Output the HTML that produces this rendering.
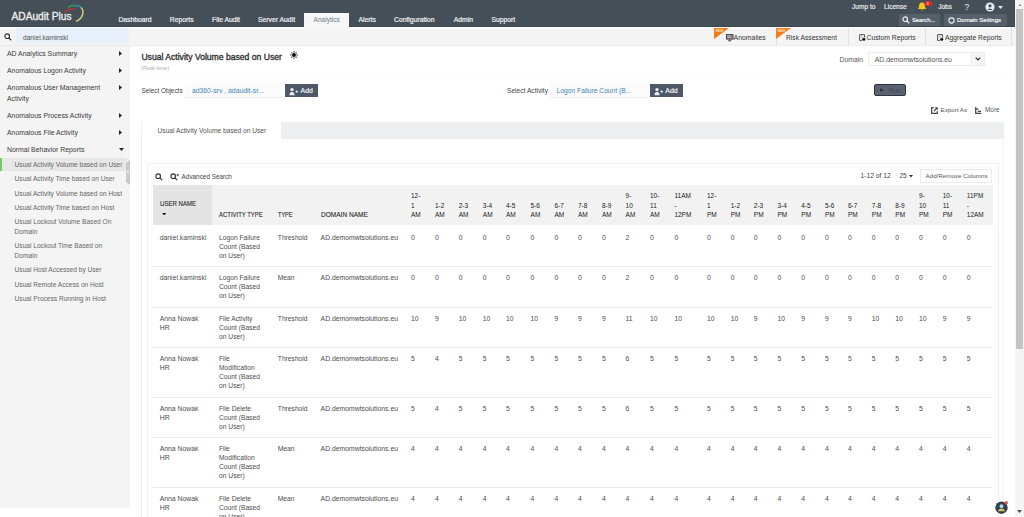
<!DOCTYPE html>
<html><head><meta charset="utf-8"><style>
html,body{margin:0;padding:0;width:1024px;height:517px;overflow:hidden;background:#fff;font-family:"Liberation Sans",sans-serif}
.t{position:absolute;white-space:nowrap;line-height:10px;height:10px}
.b{position:absolute}
</style></head><body>
<div class="b" style="left:0px;top:0px;width:1015px;height:27.4px;background:#444f57"></div>
<div class="t" style="left:11.5px;top:11.90px;font-size:10.2px;color:#f0f2f3;font-weight:normal;-webkit-text-stroke:0.3px #f0f2f3;">ADAudit Plus</div>
<svg class="b" style="left:62px;top:1px" width="26" height="24" viewBox="0 0 26 24">
<path d="M2.5 11.3 Q7.5 7.2 13 8.2" stroke="#b8363a" stroke-width="1.4" fill="none"/>
<path d="M6 6 Q11 3.5 16.6 5" stroke="#2e9e5a" stroke-width="1.4" fill="none"/>
<path d="M14.6 4.5 Q18.5 4.5 19.8 7.5" stroke="#2a8aa8" stroke-width="1.4" fill="none"/>
<path d="M19 6.5 C22.5 10 21.5 17 14 20.3" stroke="#d8d47c" stroke-width="1.4" fill="none"/>
</svg>
<div class="t" style="left:118.4px;top:15.00px;font-size:6.8px;color:#eef0f2;font-weight:normal;-webkit-text-stroke:0.2px #eef0f2;">Dashboard</div>
<div class="t" style="left:169.8px;top:15.00px;font-size:6.8px;color:#eef0f2;font-weight:normal;-webkit-text-stroke:0.2px #eef0f2;">Reports</div>
<div class="t" style="left:212px;top:15.00px;font-size:6.8px;color:#eef0f2;font-weight:normal;-webkit-text-stroke:0.2px #eef0f2;">File Audit</div>
<div class="t" style="left:258px;top:15.00px;font-size:6.8px;color:#eef0f2;font-weight:normal;-webkit-text-stroke:0.2px #eef0f2;">Server Audit</div>
<div class="t" style="left:358.5px;top:15.00px;font-size:6.8px;color:#eef0f2;font-weight:normal;-webkit-text-stroke:0.2px #eef0f2;">Alerts</div>
<div class="t" style="left:394px;top:15.00px;font-size:6.8px;color:#eef0f2;font-weight:normal;-webkit-text-stroke:0.2px #eef0f2;">Configuration</div>
<div class="t" style="left:453.7px;top:15.00px;font-size:6.8px;color:#eef0f2;font-weight:normal;-webkit-text-stroke:0.2px #eef0f2;">Admin</div>
<div class="t" style="left:491.4px;top:15.00px;font-size:6.8px;color:#eef0f2;font-weight:normal;-webkit-text-stroke:0.2px #eef0f2;">Support</div>
<div class="t" style="left:852px;top:2.10px;font-size:6.6px;color:#eef0f2;font-weight:normal;-webkit-text-stroke:0.15px #eef0f2;">Jump to</div>
<div class="t" style="left:884px;top:2.10px;font-size:6.6px;color:#eef0f2;font-weight:normal;-webkit-text-stroke:0.15px #eef0f2;">License</div>
<div class="t" style="left:938.2px;top:2.10px;font-size:6.5px;color:#eef0f2;font-weight:normal;-webkit-text-stroke:0.15px #eef0f2;">Jobs</div>
<div class="t" style="left:964.5px;top:2.10px;font-size:8.5px;color:#eef0f2;font-weight:normal;">?</div>
<svg class="b" style="left:917px;top:2px" width="10" height="9" viewBox="0 0 10 9"><path d="M5 0.5 C2.5 0.5 2 2.5 2 4.5 L1 7 L9 7 L8 4.5 C8 2.5 7.5 0.5 5 0.5Z M4 7.5 L6 7.5 L5 8.8Z" fill="#f5c518"/></svg>
<div class="b" style="left:924.5px;top:1.2px;width:7.0px;height:5.0px;background:#e5252a;border-radius:1.5px"></div>
<div class="t" style="left:926.6px;top:0.5px;font-size:4px;line-height:6px;color:#fff">3</div>
<svg class="b" style="left:985px;top:2px" width="10" height="10" viewBox="0 0 10 10"><circle cx="5" cy="5" r="4.6" fill="#e9ecee"/><circle cx="5" cy="3.8" r="1.6" fill="#444f57"/><path d="M2.2 8 Q5 4.8 7.8 8" fill="#444f57"/></svg>
<svg class="b" style="left:998.3px;top:5.6px" width="5" height="3" viewBox="0 0 5 3"><path d="M0 0 L5 0 L2.5 3Z" fill="#e9ecee"/></svg>
<div class="b" style="left:899.2px;top:14px;width:40.799999999999955px;height:11.600000000000001px;background:#55606a;border-radius:1px"></div>
<div class="b" style="left:944.3px;top:14px;width:62.30000000000007px;height:11.600000000000001px;background:#55606a;border-radius:1px"></div>
<svg class="b" style="left:902px;top:16px" width="8" height="8" viewBox="0 0 8 8"><circle cx="3.2" cy="3.2" r="2.3" stroke="#eef0f2" stroke-width="1.2" fill="none"/><path d="M4.9 4.9 L7.2 7.2" stroke="#eef0f2" stroke-width="1.3"/></svg>
<div class="t" style="left:912px;top:14.80px;font-size:5.8px;color:#f2f4f5;font-weight:normal;-webkit-text-stroke:0.2px #f2f4f5;">Search...</div>
<svg class="b" style="left:948px;top:16.5px" width="7" height="7" viewBox="0 0 7 7"><circle cx="3.5" cy="3.5" r="2.6" stroke="#eef0f2" stroke-width="1.1" fill="none"/></svg>
<div class="t" style="left:957px;top:14.80px;font-size:6.0px;color:#f2f4f5;font-weight:normal;-webkit-text-stroke:0.2px #f2f4f5;">Domain Settings</div>
<div class="b" style="left:1015px;top:0px;width:9px;height:517px;background:#f5f5f5"></div>
<div class="b" style="left:1016px;top:9px;width:7px;height:339.5px;background:#c3c3c3"></div>
<svg class="b" style="left:1017.5px;top:3.5px" width="4" height="2.5" viewBox="0 0 4 2.5"><path d="M0 2.5 L4 2.5 L2 0Z" fill="#8a8a8a"/></svg>
<svg class="b" style="left:1017px;top:510px" width="5" height="3" viewBox="0 0 5 3"><path d="M0 0 L5 0 L2.5 3Z" fill="#505050"/></svg>
<div class="b" style="left:0px;top:27px;width:1015px;height:19px;background:#f4f4f4;border-bottom:1px solid #ebebeb;box-sizing:border-box"></div>
<div class="b" style="left:0px;top:27.4px;width:1015px;height:1.2000000000000028px;background:#fafafa"></div>
<div class="b" style="left:0px;top:26.4px;width:1015px;height:1.0px;background:#3d474e"></div>
<div class="b" style="left:304.2px;top:13px;width:44.80000000000001px;height:15.600000000000001px;background:#f6f6f6"></div>
<div class="t" style="left:313.5px;top:15.00px;font-size:6.6px;color:#6f7c85;font-weight:normal;">Analytics</div>
<div class="b" style="left:16px;top:28px;width:112.80000000000001px;height:15.399999999999999px;background:#e8f0fb"></div>
<svg class="b" style="left:4px;top:33px" width="8" height="8" viewBox="0 0 8 8"><circle cx="3.2" cy="3.2" r="2.3" stroke="#333" stroke-width="1.2" fill="none"/><path d="M4.9 4.9 L7.2 7.2" stroke="#333" stroke-width="1.3"/></svg>
<div class="t" style="left:23px;top:33.20px;font-size:6.6px;color:#555;font-weight:normal;">daniel.kaminski</div>
<div class="b" style="left:775.8px;top:28px;width:1.0px;height:17px;background:#e2e2e2"></div>
<div class="b" style="left:847.6px;top:28px;width:1.0px;height:17px;background:#e2e2e2"></div>
<div class="b" style="left:925.3px;top:28px;width:1.0px;height:17px;background:#e2e2e2"></div>
<div class="b" style="left:1011px;top:28px;width:1px;height:17px;background:#e2e2e2"></div>
<svg class="b" style="left:714.4px;top:27.8px" width="15" height="11" viewBox="0 0 15 11"><path d="M0 0 L15 0 L0 11Z" fill="#f07d1b"/><text x="1.6" y="4.3" font-size="3.3" fill="#fde3c8" font-family="Liberation Sans" font-weight="bold">NEW</text></svg>
<svg class="b" style="left:776px;top:27.8px" width="15" height="11" viewBox="0 0 15 11"><path d="M0 0 L15 0 L0 11Z" fill="#f07d1b"/><text x="1.6" y="4.3" font-size="3.3" fill="#fde3c8" font-family="Liberation Sans" font-weight="bold">NEW</text></svg>
<div class="t" style="left:733.6px;top:33.40px;font-size:6.9px;color:#333;font-weight:normal;">Anomalies</div>
<div class="t" style="left:786px;top:33.40px;font-size:6.7px;color:#333;font-weight:normal;">Risk Assessment</div>
<div class="t" style="left:866.5px;top:33.40px;font-size:6.8px;color:#333;font-weight:normal;">Custom Reports</div>
<div class="t" style="left:945px;top:33.40px;font-size:6.75px;color:#333;font-weight:normal;">Aggregate Reports</div>
<svg class="b" style="left:725.8px;top:33.8px" width="8" height="8" viewBox="0 0 8 8"><rect x="0.5" y="0.5" width="6.5" height="4.6" stroke="#444" stroke-width="0.9" fill="#8a8a8a"/><path d="M1.5 2 H4 M1.5 3.3 H5" stroke="#ddd" stroke-width="0.6"/><path d="M3.75 5.3 V6.6 M2.2 6.8 H5.3" stroke="#333" stroke-width="0.9"/></svg>
<svg class="b" style="left:859px;top:33.5px" width="7" height="8" viewBox="0 0 7 8"><path d="M5.6 3.5 V0.6 H0.6 V6.4 H3" stroke="#555" stroke-width="1" fill="none"/><path d="M1.8 2 H4 M1.8 3.2 H3.5" stroke="#999" stroke-width="0.6"/><circle cx="4.8" cy="5.3" r="1.5" fill="#111"/></svg>
<svg class="b" style="left:937px;top:33.5px" width="7" height="8" viewBox="0 0 7 8"><path d="M5.6 3.5 V0.6 H0.6 V6.4 H3" stroke="#555" stroke-width="1" fill="none"/><path d="M1.8 2 H4 M1.8 3.2 H3.5" stroke="#999" stroke-width="0.6"/><circle cx="4.8" cy="5.3" r="1.5" fill="#111"/></svg>
<div class="b" style="left:0px;top:46px;width:130px;height:462px;background:#f4f4f4"></div>
<div class="t" style="left:7px;top:49.20px;font-size:6.9px;color:#3a3a3a;font-weight:normal;">AD Analytics Summary</div>
<div class="t" style="left:7px;top:66.40px;font-size:6.9px;color:#3a3a3a;font-weight:normal;">Anomalous Logon Activity</div>
<div class="t" style="left:7px;top:83.20px;font-size:6.9px;color:#3a3a3a;font-weight:normal;">Anomalous User Management</div>
<div class="t" style="left:7px;top:94.30px;font-size:6.9px;color:#3a3a3a;font-weight:normal;">Activity</div>
<div class="t" style="left:7px;top:111.20px;font-size:6.9px;color:#3a3a3a;font-weight:normal;">Anomalous Process Activity</div>
<div class="t" style="left:7px;top:128.40px;font-size:6.9px;color:#3a3a3a;font-weight:normal;">Anomalous File Activity</div>
<div class="t" style="left:7px;top:145.40px;font-size:6.9px;color:#3a3a3a;font-weight:normal;">Normal Behavior Reports</div>
<svg class="b" style="left:119px;top:50.8px" width="3" height="5" viewBox="0 0 3 5"><path d="M0 0 L3 2.5 L0 5Z" fill="#222"/></svg>
<svg class="b" style="left:119px;top:67.7px" width="3" height="5" viewBox="0 0 3 5"><path d="M0 0 L3 2.5 L0 5Z" fill="#222"/></svg>
<svg class="b" style="left:119px;top:84.9px" width="3" height="5" viewBox="0 0 3 5"><path d="M0 0 L3 2.5 L0 5Z" fill="#222"/></svg>
<svg class="b" style="left:119px;top:112.8px" width="3" height="5" viewBox="0 0 3 5"><path d="M0 0 L3 2.5 L0 5Z" fill="#222"/></svg>
<svg class="b" style="left:119px;top:129.7px" width="3" height="5" viewBox="0 0 3 5"><path d="M0 0 L3 2.5 L0 5Z" fill="#222"/></svg>
<svg class="b" style="left:118.5px;top:147.5px" width="5" height="3" viewBox="0 0 5 3"><path d="M0 0 L5 0 L2.5 3Z" fill="#222"/></svg>
<div class="b" style="left:0px;top:158px;width:127px;height:13px;background:#e7e7e7"></div>
<div class="b" style="left:0px;top:158px;width:1.8px;height:13px;background:#7cc46a"></div>
<div class="t" style="left:14.6px;top:160.20px;font-size:6.6px;color:#666;font-weight:normal;">Usual Activity Volume based on User</div>
<div class="t" style="left:14.6px;top:174.40px;font-size:6.6px;color:#666;font-weight:normal;">Usual Activity Time based on User</div>
<div class="t" style="left:14.6px;top:188.50px;font-size:6.6px;color:#666;font-weight:normal;">Usual Activity Volume based on Host</div>
<div class="t" style="left:14.6px;top:203.20px;font-size:6.6px;color:#666;font-weight:normal;">Usual Activity Time based on Host</div>
<div class="t" style="left:14.6px;top:216.80px;font-size:6.6px;color:#666;font-weight:normal;">Usual Lockout Volume Based On</div>
<div class="t" style="left:14.6px;top:227.20px;font-size:6.6px;color:#666;font-weight:normal;">Domain</div>
<div class="t" style="left:14.6px;top:240.90px;font-size:6.6px;color:#666;font-weight:normal;">Usual Lockout Time Based on</div>
<div class="t" style="left:14.6px;top:251.10px;font-size:6.6px;color:#666;font-weight:normal;">Domain</div>
<div class="t" style="left:14.6px;top:264.80px;font-size:6.6px;color:#666;font-weight:normal;">Usual Host Accessed by User</div>
<div class="t" style="left:14.6px;top:279.80px;font-size:6.6px;color:#666;font-weight:normal;">Usual Remote Access on Host</div>
<div class="t" style="left:14.6px;top:293.80px;font-size:6.6px;color:#666;font-weight:normal;">Usual Process Running in Host</div>
<svg class="b" style="left:126px;top:160px" width="4" height="25" viewBox="0 0 4 25"><path d="M4 0 L4 25 L0 22 L0 3Z" fill="#c9c9c9"/><rect x="1.5" y="10" width="1" height="3" fill="#fff"/></svg>
<div class="t" style="left:141.4px;top:51.90px;font-size:8.6px;color:#333;font-weight:normal;-webkit-text-stroke:0.35px #333;">Usual Activity Volume based on User</div>
<svg class="b" style="left:290.1px;top:50.5px" width="8" height="8" viewBox="0 0 8 8"><circle cx="4" cy="4" r="1.9" fill="#000"/><circle cx="7.10" cy="4.00" r="0.65" fill="#111"/><circle cx="6.19" cy="6.19" r="0.65" fill="#111"/><circle cx="4.00" cy="7.10" r="0.65" fill="#111"/><circle cx="1.81" cy="6.19" r="0.65" fill="#111"/><circle cx="0.90" cy="4.00" r="0.65" fill="#111"/><circle cx="1.81" cy="1.81" r="0.65" fill="#111"/><circle cx="4.00" cy="0.90" r="0.65" fill="#111"/><circle cx="6.19" cy="1.81" r="0.65" fill="#111"/></svg>
<div class="t" style="left:141px;top:62.60px;font-size:6.2px;color:#b0b0b0;font-weight:normal;transform:scaleX(0.92);transform-origin:0 0;">(Real-time)</div>
<div class="t" style="left:141.4px;top:86.00px;font-size:6.4px;color:#444;font-weight:normal;">Select Objects</div>
<div class="b" style="left:184.5px;top:83px;width:97.5px;height:14.599999999999994px;background:#fbfbfb;border-bottom:1px solid #f0f0f0;box-sizing:border-box"></div>
<div class="t" style="left:191.9px;top:86.00px;font-size:6.85px;color:#3b86b8;font-weight:normal;">ad360-srv , adaudit-sr...</div>
<div class="t" style="left:507px;top:85.90px;font-size:6.65px;color:#444;font-weight:normal;">Select Activity</div>
<div class="b" style="left:550px;top:83px;width:99px;height:14.599999999999994px;background:#fbfbfb;border-bottom:1px solid #f0f0f0;box-sizing:border-box"></div>
<div class="t" style="left:556.7px;top:85.90px;font-size:6.68px;color:#3b86b8;font-weight:normal;">Logon Failure Count (B...</div>
<div class="b" style="left:285.3px;top:84.2px;width:33.0px;height:13.099999999999994px;background:#4f5866"></div>
<svg class="b" style="left:289.3px;top:86.5px" width="10" height="9" viewBox="0 0 10 9"><circle cx="3" cy="2.6" r="1.7" fill="#e8ebef"/><path d="M0.4 8.3 L0.9 6.2 Q1.3 4.9 3 4.9 Q4.7 4.9 5.1 6.2 L5.6 8.3Z" fill="#e8ebef"/><path d="M6.4 4.6 H9 M7.7 3.3 V5.9" stroke="#e8ebef" stroke-width="0.9"/></svg>
<div class="t" style="left:300.6px;top:86.40px;font-size:6.9px;color:#eef0f2;font-weight:normal;-webkit-text-stroke:0.2px #eef0f2;">Add</div>
<div class="b" style="left:650px;top:84.2px;width:33px;height:13.099999999999994px;background:#4f5866"></div>
<svg class="b" style="left:654px;top:86.5px" width="10" height="9" viewBox="0 0 10 9"><circle cx="3" cy="2.6" r="1.7" fill="#e8ebef"/><path d="M0.4 8.3 L0.9 6.2 Q1.3 4.9 3 4.9 Q4.7 4.9 5.1 6.2 L5.6 8.3Z" fill="#e8ebef"/><path d="M6.4 4.6 H9 M7.7 3.3 V5.9" stroke="#e8ebef" stroke-width="0.9"/></svg>
<div class="t" style="left:665.3px;top:86.40px;font-size:6.9px;color:#eef0f2;font-weight:normal;-webkit-text-stroke:0.2px #eef0f2;">Add</div>
<div class="t" style="left:839.6px;top:54.80px;font-size:6.79px;color:#555;font-weight:normal;">Domain</div>
<div class="b" style="left:868px;top:51.5px;width:117.29999999999995px;height:14.299999999999997px;background:#fff;border:1px solid #ececec;box-sizing:border-box"></div>
<div class="b" style="left:970px;top:52.5px;width:14.299999999999955px;height:12.299999999999997px;background:#f5f5f5"></div>
<div class="t" style="left:874.8px;top:54.80px;font-size:6.8px;color:#555;font-weight:normal;">AD.demomwtsolutions.eu</div>
<svg class="b" style="left:975.3px;top:56.8px" width="6" height="4" viewBox="0 0 6 4"><path d="M0.7 0.7 L3 3 L5.3 0.7" stroke="#333" stroke-width="1.2" fill="none"/></svg>
<div class="b" style="left:874px;top:84.2px;width:32px;height:12.0px;background:#5b6370;border:1px solid #2f343c;border-radius:2px;box-sizing:border-box"></div>
<svg class="b" style="left:879.8px;top:87.6px" width="4.2" height="4.2" viewBox="0 0 5 5"><path d="M0 0 L5 2.5 L0 5Z" fill="#353a42"/></svg>
<div class="t" style="left:888.8px;top:85.70px;font-size:6.6px;color:#3f4550;font-weight:normal;">Run</div>
<svg class="b" style="left:930.5px;top:106.5px" width="7" height="7" viewBox="0 0 7 7"><path d="M2.8 0.7 H0.7 V6.3 H6.3 V4.2" stroke="#444" stroke-width="1.2" fill="none"/><path d="M3 4 L6.3 0.7 M4.2 0.7 H6.3 V2.8" stroke="#444" stroke-width="1.1" fill="none"/></svg>
<div class="t" style="left:940.6px;top:104.60px;font-size:6.2px;color:#555;font-weight:normal;">Export As</div>
<svg class="b" style="left:975px;top:106.5px" width="7" height="7" viewBox="0 0 7 7"><path d="M0.7 0 V6.3 H6.3 M0.7 2.2 H3.5 M2.8 4.3 H6" stroke="#444" stroke-width="1.2" fill="none"/></svg>
<div class="t" style="left:985px;top:104.60px;font-size:6.4px;color:#555;font-weight:normal;">More</div>
<div class="b" style="left:131px;top:74px;width:884px;height:1px;background:#fbfbfb"></div>
<div class="b" style="left:141px;top:121.8px;width:863px;height:395.2px;background:#fff;border-left:1px solid #ebebeb;border-right:1px solid #f5f5f5;box-sizing:border-box"></div>
<div class="b" style="left:141px;top:121.8px;width:863px;height:16.89999999999999px;background:#eceef0"></div>
<div class="b" style="left:141.6px;top:121.8px;width:139.9px;height:16.89999999999999px;background:#fff"></div>
<div class="t" style="left:157.5px;top:125.60px;font-size:6.67px;color:#555;font-weight:normal;">Usual Activity Volume based on User</div>
<div class="b" style="left:147px;top:163px;width:851.8px;height:357px;background:#fff;border:1px solid #f0f0f0;box-sizing:border-box"></div>
<svg class="b" style="left:154.5px;top:172.8px" width="8" height="8" viewBox="0 0 8 8"><circle cx="3.2" cy="3.2" r="2.3" stroke="#333" stroke-width="1.1" fill="none"/><path d="M4.9 4.9 L7.2 7.2" stroke="#333" stroke-width="1.2"/></svg>
<svg class="b" style="left:169.8px;top:172.6px" width="9" height="8" viewBox="0 0 9 8"><circle cx="3.2" cy="3.2" r="2.3" stroke="#333" stroke-width="1.1" fill="none"/><path d="M4.9 4.9 L7.2 7.2" stroke="#333" stroke-width="1.2"/><path d="M6.5 2 H9 M7.75 0.75 V3.25" stroke="#333" stroke-width="0.8"/></svg>
<div class="t" style="left:181.6px;top:172.20px;font-size:6.38px;color:#444;font-weight:normal;">Advanced Search</div>
<div class="t" style="left:860.4px;top:171.40px;font-size:6.75px;color:#444;font-weight:normal;">1-12 of 12</div>
<div class="t" style="left:899.4px;top:171.40px;font-size:6.5px;color:#444;font-weight:normal;">25</div>
<svg class="b" style="left:908.5px;top:175px" width="4" height="3" viewBox="0 0 4 3"><path d="M0 0 L4 0 L2 2.5Z" fill="#333"/></svg>
<div class="b" style="left:919.5px;top:169.4px;width:72.70000000000005px;height:13.400000000000006px;background:#fff;border:1px solid #ebebeb;box-sizing:border-box"></div>
<div class="t" style="left:925.6px;top:171.20px;font-size:6.2px;color:#555;font-weight:normal;">Add/Remove Columns</div>
<div class="b" style="left:153px;top:185.3px;width:839.7px;height:39.89999999999998px;background:#f2f2f2"></div>
<div class="b" style="left:153px;top:185.3px;width:59px;height:39.89999999999998px;background:#e4e4e4"></div>
<div class="t" style="left:159.7px;top:199.45px;font-size:7.0px;color:#333;font-weight:normal;transform:scaleX(0.866);transform-origin:0 0;-webkit-text-stroke:0.15px #333;">USER NAME</div>
<svg class="b" style="left:161.8px;top:212.6px" width="4.4" height="2.6" viewBox="0 0 4.4 2.6"><path d="M0 0 L4.4 0 L2.2 2.6Z" fill="#222"/></svg>
<div class="t" style="left:219.1px;top:209.60px;font-size:7.0px;color:#333;font-weight:normal;transform:scaleX(0.849);transform-origin:0 0;-webkit-text-stroke:0.15px #333;">ACTIVITY TYPE</div>
<div class="t" style="left:278.1px;top:209.60px;font-size:7.0px;color:#333;font-weight:normal;transform:scaleX(0.79);transform-origin:0 0;-webkit-text-stroke:0.15px #333;">TYPE</div>
<div class="t" style="left:321px;top:209.60px;font-size:7.0px;color:#333;font-weight:normal;transform:scaleX(0.933);transform-origin:0 0;-webkit-text-stroke:0.15px #333;">DOMAIN NAME</div>
<div class="t" style="left:411px;top:191.20px;font-size:6.5px;color:#222;font-weight:normal;">12-</div>
<div class="t" style="left:411px;top:200.60px;font-size:6.5px;color:#222;font-weight:normal;">1</div>
<div class="t" style="left:411px;top:209.90px;font-size:6.5px;color:#222;font-weight:normal;">AM</div>
<div class="t" style="left:435px;top:200.60px;font-size:6.5px;color:#222;font-weight:normal;">1-2</div>
<div class="t" style="left:435px;top:209.90px;font-size:6.5px;color:#222;font-weight:normal;">AM</div>
<div class="t" style="left:458.75px;top:200.60px;font-size:6.5px;color:#222;font-weight:normal;">2-3</div>
<div class="t" style="left:458.75px;top:209.90px;font-size:6.5px;color:#222;font-weight:normal;">AM</div>
<div class="t" style="left:482.8px;top:200.60px;font-size:6.5px;color:#222;font-weight:normal;">3-4</div>
<div class="t" style="left:482.8px;top:209.90px;font-size:6.5px;color:#222;font-weight:normal;">AM</div>
<div class="t" style="left:506px;top:200.60px;font-size:6.5px;color:#222;font-weight:normal;">4-5</div>
<div class="t" style="left:506px;top:209.90px;font-size:6.5px;color:#222;font-weight:normal;">AM</div>
<div class="t" style="left:530.6px;top:200.60px;font-size:6.5px;color:#222;font-weight:normal;">5-6</div>
<div class="t" style="left:530.6px;top:209.90px;font-size:6.5px;color:#222;font-weight:normal;">AM</div>
<div class="t" style="left:554.4px;top:200.60px;font-size:6.5px;color:#222;font-weight:normal;">6-7</div>
<div class="t" style="left:554.4px;top:209.90px;font-size:6.5px;color:#222;font-weight:normal;">AM</div>
<div class="t" style="left:578px;top:200.60px;font-size:6.5px;color:#222;font-weight:normal;">7-8</div>
<div class="t" style="left:578px;top:209.90px;font-size:6.5px;color:#222;font-weight:normal;">AM</div>
<div class="t" style="left:602px;top:200.60px;font-size:6.5px;color:#222;font-weight:normal;">8-9</div>
<div class="t" style="left:602px;top:209.90px;font-size:6.5px;color:#222;font-weight:normal;">AM</div>
<div class="t" style="left:625.6px;top:191.20px;font-size:6.5px;color:#222;font-weight:normal;">9-</div>
<div class="t" style="left:625.6px;top:200.60px;font-size:6.5px;color:#222;font-weight:normal;">10</div>
<div class="t" style="left:625.6px;top:209.90px;font-size:6.5px;color:#222;font-weight:normal;">AM</div>
<div class="t" style="left:650px;top:191.20px;font-size:6.5px;color:#222;font-weight:normal;">10-</div>
<div class="t" style="left:650px;top:200.60px;font-size:6.5px;color:#222;font-weight:normal;">11</div>
<div class="t" style="left:650px;top:209.90px;font-size:6.5px;color:#222;font-weight:normal;">AM</div>
<div class="t" style="left:674.4px;top:191.20px;font-size:6.5px;color:#222;font-weight:normal;">11AM</div>
<div class="t" style="left:674.4px;top:200.60px;font-size:6.5px;color:#222;font-weight:normal;">-</div>
<div class="t" style="left:674.4px;top:209.90px;font-size:6.5px;color:#222;font-weight:normal;">12PM</div>
<div class="t" style="left:707px;top:191.20px;font-size:6.5px;color:#222;font-weight:normal;">12-</div>
<div class="t" style="left:707px;top:200.60px;font-size:6.5px;color:#222;font-weight:normal;">1</div>
<div class="t" style="left:707px;top:209.90px;font-size:6.5px;color:#222;font-weight:normal;">PM</div>
<div class="t" style="left:730.7px;top:200.60px;font-size:6.5px;color:#222;font-weight:normal;">1-2</div>
<div class="t" style="left:730.7px;top:209.90px;font-size:6.5px;color:#222;font-weight:normal;">PM</div>
<div class="t" style="left:753.8px;top:200.60px;font-size:6.5px;color:#222;font-weight:normal;">2-3</div>
<div class="t" style="left:753.8px;top:209.90px;font-size:6.5px;color:#222;font-weight:normal;">PM</div>
<div class="t" style="left:777.5px;top:200.60px;font-size:6.5px;color:#222;font-weight:normal;">3-4</div>
<div class="t" style="left:777.5px;top:209.90px;font-size:6.5px;color:#222;font-weight:normal;">PM</div>
<div class="t" style="left:801.3px;top:200.60px;font-size:6.5px;color:#222;font-weight:normal;">4-5</div>
<div class="t" style="left:801.3px;top:209.90px;font-size:6.5px;color:#222;font-weight:normal;">PM</div>
<div class="t" style="left:825px;top:200.60px;font-size:6.5px;color:#222;font-weight:normal;">5-6</div>
<div class="t" style="left:825px;top:209.90px;font-size:6.5px;color:#222;font-weight:normal;">PM</div>
<div class="t" style="left:848px;top:200.60px;font-size:6.5px;color:#222;font-weight:normal;">6-7</div>
<div class="t" style="left:848px;top:209.90px;font-size:6.5px;color:#222;font-weight:normal;">PM</div>
<div class="t" style="left:871.8px;top:200.60px;font-size:6.5px;color:#222;font-weight:normal;">7-8</div>
<div class="t" style="left:871.8px;top:209.90px;font-size:6.5px;color:#222;font-weight:normal;">PM</div>
<div class="t" style="left:895.3px;top:200.60px;font-size:6.5px;color:#222;font-weight:normal;">8-9</div>
<div class="t" style="left:895.3px;top:209.90px;font-size:6.5px;color:#222;font-weight:normal;">PM</div>
<div class="t" style="left:919px;top:191.20px;font-size:6.5px;color:#222;font-weight:normal;">9-</div>
<div class="t" style="left:919px;top:200.60px;font-size:6.5px;color:#222;font-weight:normal;">10</div>
<div class="t" style="left:919px;top:209.90px;font-size:6.5px;color:#222;font-weight:normal;">PM</div>
<div class="t" style="left:942.7px;top:191.20px;font-size:6.5px;color:#222;font-weight:normal;">10-</div>
<div class="t" style="left:942.7px;top:200.60px;font-size:6.5px;color:#222;font-weight:normal;">11</div>
<div class="t" style="left:942.7px;top:209.90px;font-size:6.5px;color:#222;font-weight:normal;">PM</div>
<div class="t" style="left:966.8px;top:191.20px;font-size:6.5px;color:#222;font-weight:normal;">11PM</div>
<div class="t" style="left:966.8px;top:200.60px;font-size:6.5px;color:#222;font-weight:normal;">-</div>
<div class="t" style="left:966.8px;top:209.90px;font-size:6.5px;color:#222;font-weight:normal;">12AM</div>
<div class="b" style="left:153px;top:266.25px;width:839.3px;height:1.0px;background:#e9e9e9"></div>
<div class="b" style="left:153px;top:306.5px;width:839.3px;height:1.0px;background:#e9e9e9"></div>
<div class="b" style="left:153px;top:347px;width:839.3px;height:1px;background:#e9e9e9"></div>
<div class="b" style="left:153px;top:397.4px;width:839.3px;height:1.0px;background:#e9e9e9"></div>
<div class="b" style="left:153px;top:437.3px;width:839.3px;height:1.0px;background:#e9e9e9"></div>
<div class="b" style="left:153px;top:487.2px;width:839.3px;height:1.0px;background:#e9e9e9"></div>
<div class="t" style="left:159.7px;top:232.70px;font-size:6.85px;color:#4d4d4d;font-weight:normal;">daniel.kaminski</div>
<div class="t" style="left:219px;top:232.70px;font-size:6.7px;color:#4d4d4d;font-weight:normal;">Logon Failure</div>
<div class="t" style="left:219px;top:241.70px;font-size:6.7px;color:#4d4d4d;font-weight:normal;">Count (Based</div>
<div class="t" style="left:219px;top:250.70px;font-size:6.7px;color:#4d4d4d;font-weight:normal;">on User)</div>
<div class="t" style="left:277.8px;top:232.70px;font-size:6.7px;color:#4d4d4d;font-weight:normal;">Threshold</div>
<div class="t" style="left:320.6px;top:232.70px;font-size:6.83px;color:#4d4d4d;font-weight:normal;">AD.demomwtsolutions.eu</div>
<div class="t" style="left:411px;top:232.70px;font-size:6.8px;color:#4d4d4d;font-weight:normal;">0</div>
<div class="t" style="left:435px;top:232.70px;font-size:6.8px;color:#4d4d4d;font-weight:normal;">0</div>
<div class="t" style="left:458.75px;top:232.70px;font-size:6.8px;color:#4d4d4d;font-weight:normal;">0</div>
<div class="t" style="left:482.8px;top:232.70px;font-size:6.8px;color:#4d4d4d;font-weight:normal;">0</div>
<div class="t" style="left:506px;top:232.70px;font-size:6.8px;color:#4d4d4d;font-weight:normal;">0</div>
<div class="t" style="left:530.6px;top:232.70px;font-size:6.8px;color:#4d4d4d;font-weight:normal;">0</div>
<div class="t" style="left:554.4px;top:232.70px;font-size:6.8px;color:#4d4d4d;font-weight:normal;">0</div>
<div class="t" style="left:578px;top:232.70px;font-size:6.8px;color:#4d4d4d;font-weight:normal;">0</div>
<div class="t" style="left:602px;top:232.70px;font-size:6.8px;color:#4d4d4d;font-weight:normal;">0</div>
<div class="t" style="left:625.6px;top:232.70px;font-size:6.8px;color:#4d4d4d;font-weight:normal;">2</div>
<div class="t" style="left:650px;top:232.70px;font-size:6.8px;color:#4d4d4d;font-weight:normal;">0</div>
<div class="t" style="left:674.4px;top:232.70px;font-size:6.8px;color:#4d4d4d;font-weight:normal;">0</div>
<div class="t" style="left:707px;top:232.70px;font-size:6.8px;color:#4d4d4d;font-weight:normal;">0</div>
<div class="t" style="left:730.7px;top:232.70px;font-size:6.8px;color:#4d4d4d;font-weight:normal;">0</div>
<div class="t" style="left:753.8px;top:232.70px;font-size:6.8px;color:#4d4d4d;font-weight:normal;">0</div>
<div class="t" style="left:777.5px;top:232.70px;font-size:6.8px;color:#4d4d4d;font-weight:normal;">0</div>
<div class="t" style="left:801.3px;top:232.70px;font-size:6.8px;color:#4d4d4d;font-weight:normal;">0</div>
<div class="t" style="left:825px;top:232.70px;font-size:6.8px;color:#4d4d4d;font-weight:normal;">0</div>
<div class="t" style="left:848px;top:232.70px;font-size:6.8px;color:#4d4d4d;font-weight:normal;">0</div>
<div class="t" style="left:871.8px;top:232.70px;font-size:6.8px;color:#4d4d4d;font-weight:normal;">0</div>
<div class="t" style="left:895.3px;top:232.70px;font-size:6.8px;color:#4d4d4d;font-weight:normal;">0</div>
<div class="t" style="left:919px;top:232.70px;font-size:6.8px;color:#4d4d4d;font-weight:normal;">0</div>
<div class="t" style="left:942.7px;top:232.70px;font-size:6.8px;color:#4d4d4d;font-weight:normal;">0</div>
<div class="t" style="left:966.8px;top:232.70px;font-size:6.8px;color:#4d4d4d;font-weight:normal;">0</div>
<div class="t" style="left:159.7px;top:273.00px;font-size:6.85px;color:#4d4d4d;font-weight:normal;">daniel.kaminski</div>
<div class="t" style="left:219px;top:273.00px;font-size:6.7px;color:#4d4d4d;font-weight:normal;">Logon Failure</div>
<div class="t" style="left:219px;top:282.00px;font-size:6.7px;color:#4d4d4d;font-weight:normal;">Count (Based</div>
<div class="t" style="left:219px;top:291.00px;font-size:6.7px;color:#4d4d4d;font-weight:normal;">on User)</div>
<div class="t" style="left:277.8px;top:273.00px;font-size:6.7px;color:#4d4d4d;font-weight:normal;">Mean</div>
<div class="t" style="left:320.6px;top:273.00px;font-size:6.83px;color:#4d4d4d;font-weight:normal;">AD.demomwtsolutions.eu</div>
<div class="t" style="left:411px;top:273.00px;font-size:6.8px;color:#4d4d4d;font-weight:normal;">0</div>
<div class="t" style="left:435px;top:273.00px;font-size:6.8px;color:#4d4d4d;font-weight:normal;">0</div>
<div class="t" style="left:458.75px;top:273.00px;font-size:6.8px;color:#4d4d4d;font-weight:normal;">0</div>
<div class="t" style="left:482.8px;top:273.00px;font-size:6.8px;color:#4d4d4d;font-weight:normal;">0</div>
<div class="t" style="left:506px;top:273.00px;font-size:6.8px;color:#4d4d4d;font-weight:normal;">0</div>
<div class="t" style="left:530.6px;top:273.00px;font-size:6.8px;color:#4d4d4d;font-weight:normal;">0</div>
<div class="t" style="left:554.4px;top:273.00px;font-size:6.8px;color:#4d4d4d;font-weight:normal;">0</div>
<div class="t" style="left:578px;top:273.00px;font-size:6.8px;color:#4d4d4d;font-weight:normal;">0</div>
<div class="t" style="left:602px;top:273.00px;font-size:6.8px;color:#4d4d4d;font-weight:normal;">0</div>
<div class="t" style="left:625.6px;top:273.00px;font-size:6.8px;color:#4d4d4d;font-weight:normal;">2</div>
<div class="t" style="left:650px;top:273.00px;font-size:6.8px;color:#4d4d4d;font-weight:normal;">0</div>
<div class="t" style="left:674.4px;top:273.00px;font-size:6.8px;color:#4d4d4d;font-weight:normal;">0</div>
<div class="t" style="left:707px;top:273.00px;font-size:6.8px;color:#4d4d4d;font-weight:normal;">0</div>
<div class="t" style="left:730.7px;top:273.00px;font-size:6.8px;color:#4d4d4d;font-weight:normal;">0</div>
<div class="t" style="left:753.8px;top:273.00px;font-size:6.8px;color:#4d4d4d;font-weight:normal;">0</div>
<div class="t" style="left:777.5px;top:273.00px;font-size:6.8px;color:#4d4d4d;font-weight:normal;">0</div>
<div class="t" style="left:801.3px;top:273.00px;font-size:6.8px;color:#4d4d4d;font-weight:normal;">0</div>
<div class="t" style="left:825px;top:273.00px;font-size:6.8px;color:#4d4d4d;font-weight:normal;">0</div>
<div class="t" style="left:848px;top:273.00px;font-size:6.8px;color:#4d4d4d;font-weight:normal;">0</div>
<div class="t" style="left:871.8px;top:273.00px;font-size:6.8px;color:#4d4d4d;font-weight:normal;">0</div>
<div class="t" style="left:895.3px;top:273.00px;font-size:6.8px;color:#4d4d4d;font-weight:normal;">0</div>
<div class="t" style="left:919px;top:273.00px;font-size:6.8px;color:#4d4d4d;font-weight:normal;">0</div>
<div class="t" style="left:942.7px;top:273.00px;font-size:6.8px;color:#4d4d4d;font-weight:normal;">0</div>
<div class="t" style="left:966.8px;top:273.00px;font-size:6.8px;color:#4d4d4d;font-weight:normal;">0</div>
<div class="t" style="left:159.7px;top:314.20px;font-size:6.85px;color:#4d4d4d;font-weight:normal;">Anna Nowak</div>
<div class="t" style="left:159.7px;top:323.20px;font-size:6.85px;color:#4d4d4d;font-weight:normal;">HR</div>
<div class="t" style="left:219px;top:314.20px;font-size:6.7px;color:#4d4d4d;font-weight:normal;">File Activity</div>
<div class="t" style="left:219px;top:323.20px;font-size:6.7px;color:#4d4d4d;font-weight:normal;">Count (Based</div>
<div class="t" style="left:219px;top:332.20px;font-size:6.7px;color:#4d4d4d;font-weight:normal;">on User)</div>
<div class="t" style="left:277.8px;top:314.20px;font-size:6.7px;color:#4d4d4d;font-weight:normal;">Threshold</div>
<div class="t" style="left:320.6px;top:314.20px;font-size:6.83px;color:#4d4d4d;font-weight:normal;">AD.demomwtsolutions.eu</div>
<div class="t" style="left:411px;top:314.20px;font-size:6.8px;color:#4d4d4d;font-weight:normal;">10</div>
<div class="t" style="left:435px;top:314.20px;font-size:6.8px;color:#4d4d4d;font-weight:normal;">9</div>
<div class="t" style="left:458.75px;top:314.20px;font-size:6.8px;color:#4d4d4d;font-weight:normal;">10</div>
<div class="t" style="left:482.8px;top:314.20px;font-size:6.8px;color:#4d4d4d;font-weight:normal;">10</div>
<div class="t" style="left:506px;top:314.20px;font-size:6.8px;color:#4d4d4d;font-weight:normal;">10</div>
<div class="t" style="left:530.6px;top:314.20px;font-size:6.8px;color:#4d4d4d;font-weight:normal;">10</div>
<div class="t" style="left:554.4px;top:314.20px;font-size:6.8px;color:#4d4d4d;font-weight:normal;">9</div>
<div class="t" style="left:578px;top:314.20px;font-size:6.8px;color:#4d4d4d;font-weight:normal;">9</div>
<div class="t" style="left:602px;top:314.20px;font-size:6.8px;color:#4d4d4d;font-weight:normal;">9</div>
<div class="t" style="left:625.6px;top:314.20px;font-size:6.8px;color:#4d4d4d;font-weight:normal;">11</div>
<div class="t" style="left:650px;top:314.20px;font-size:6.8px;color:#4d4d4d;font-weight:normal;">10</div>
<div class="t" style="left:674.4px;top:314.20px;font-size:6.8px;color:#4d4d4d;font-weight:normal;">10</div>
<div class="t" style="left:707px;top:314.20px;font-size:6.8px;color:#4d4d4d;font-weight:normal;">10</div>
<div class="t" style="left:730.7px;top:314.20px;font-size:6.8px;color:#4d4d4d;font-weight:normal;">10</div>
<div class="t" style="left:753.8px;top:314.20px;font-size:6.8px;color:#4d4d4d;font-weight:normal;">9</div>
<div class="t" style="left:777.5px;top:314.20px;font-size:6.8px;color:#4d4d4d;font-weight:normal;">10</div>
<div class="t" style="left:801.3px;top:314.20px;font-size:6.8px;color:#4d4d4d;font-weight:normal;">9</div>
<div class="t" style="left:825px;top:314.20px;font-size:6.8px;color:#4d4d4d;font-weight:normal;">9</div>
<div class="t" style="left:848px;top:314.20px;font-size:6.8px;color:#4d4d4d;font-weight:normal;">9</div>
<div class="t" style="left:871.8px;top:314.20px;font-size:6.8px;color:#4d4d4d;font-weight:normal;">10</div>
<div class="t" style="left:895.3px;top:314.20px;font-size:6.8px;color:#4d4d4d;font-weight:normal;">10</div>
<div class="t" style="left:919px;top:314.20px;font-size:6.8px;color:#4d4d4d;font-weight:normal;">10</div>
<div class="t" style="left:942.7px;top:314.20px;font-size:6.8px;color:#4d4d4d;font-weight:normal;">9</div>
<div class="t" style="left:966.8px;top:314.20px;font-size:6.8px;color:#4d4d4d;font-weight:normal;">9</div>
<div class="t" style="left:159.7px;top:354.00px;font-size:6.85px;color:#4d4d4d;font-weight:normal;">Anna Nowak</div>
<div class="t" style="left:159.7px;top:363.00px;font-size:6.85px;color:#4d4d4d;font-weight:normal;">HR</div>
<div class="t" style="left:219px;top:354.00px;font-size:6.7px;color:#4d4d4d;font-weight:normal;">File</div>
<div class="t" style="left:219px;top:363.00px;font-size:6.7px;color:#4d4d4d;font-weight:normal;">Modification</div>
<div class="t" style="left:219px;top:372.00px;font-size:6.7px;color:#4d4d4d;font-weight:normal;">Count (Based</div>
<div class="t" style="left:219px;top:381.00px;font-size:6.7px;color:#4d4d4d;font-weight:normal;">on User)</div>
<div class="t" style="left:277.8px;top:354.00px;font-size:6.7px;color:#4d4d4d;font-weight:normal;">Threshold</div>
<div class="t" style="left:320.6px;top:354.00px;font-size:6.83px;color:#4d4d4d;font-weight:normal;">AD.demomwtsolutions.eu</div>
<div class="t" style="left:411px;top:354.00px;font-size:6.8px;color:#4d4d4d;font-weight:normal;">5</div>
<div class="t" style="left:435px;top:354.00px;font-size:6.8px;color:#4d4d4d;font-weight:normal;">4</div>
<div class="t" style="left:458.75px;top:354.00px;font-size:6.8px;color:#4d4d4d;font-weight:normal;">5</div>
<div class="t" style="left:482.8px;top:354.00px;font-size:6.8px;color:#4d4d4d;font-weight:normal;">5</div>
<div class="t" style="left:506px;top:354.00px;font-size:6.8px;color:#4d4d4d;font-weight:normal;">5</div>
<div class="t" style="left:530.6px;top:354.00px;font-size:6.8px;color:#4d4d4d;font-weight:normal;">5</div>
<div class="t" style="left:554.4px;top:354.00px;font-size:6.8px;color:#4d4d4d;font-weight:normal;">5</div>
<div class="t" style="left:578px;top:354.00px;font-size:6.8px;color:#4d4d4d;font-weight:normal;">5</div>
<div class="t" style="left:602px;top:354.00px;font-size:6.8px;color:#4d4d4d;font-weight:normal;">5</div>
<div class="t" style="left:625.6px;top:354.00px;font-size:6.8px;color:#4d4d4d;font-weight:normal;">6</div>
<div class="t" style="left:650px;top:354.00px;font-size:6.8px;color:#4d4d4d;font-weight:normal;">5</div>
<div class="t" style="left:674.4px;top:354.00px;font-size:6.8px;color:#4d4d4d;font-weight:normal;">5</div>
<div class="t" style="left:707px;top:354.00px;font-size:6.8px;color:#4d4d4d;font-weight:normal;">5</div>
<div class="t" style="left:730.7px;top:354.00px;font-size:6.8px;color:#4d4d4d;font-weight:normal;">5</div>
<div class="t" style="left:753.8px;top:354.00px;font-size:6.8px;color:#4d4d4d;font-weight:normal;">5</div>
<div class="t" style="left:777.5px;top:354.00px;font-size:6.8px;color:#4d4d4d;font-weight:normal;">5</div>
<div class="t" style="left:801.3px;top:354.00px;font-size:6.8px;color:#4d4d4d;font-weight:normal;">5</div>
<div class="t" style="left:825px;top:354.00px;font-size:6.8px;color:#4d4d4d;font-weight:normal;">5</div>
<div class="t" style="left:848px;top:354.00px;font-size:6.8px;color:#4d4d4d;font-weight:normal;">5</div>
<div class="t" style="left:871.8px;top:354.00px;font-size:6.8px;color:#4d4d4d;font-weight:normal;">5</div>
<div class="t" style="left:895.3px;top:354.00px;font-size:6.8px;color:#4d4d4d;font-weight:normal;">5</div>
<div class="t" style="left:919px;top:354.00px;font-size:6.8px;color:#4d4d4d;font-weight:normal;">5</div>
<div class="t" style="left:942.7px;top:354.00px;font-size:6.8px;color:#4d4d4d;font-weight:normal;">5</div>
<div class="t" style="left:966.8px;top:354.00px;font-size:6.8px;color:#4d4d4d;font-weight:normal;">5</div>
<div class="t" style="left:159.7px;top:404.00px;font-size:6.85px;color:#4d4d4d;font-weight:normal;">Anna Nowak</div>
<div class="t" style="left:159.7px;top:413.00px;font-size:6.85px;color:#4d4d4d;font-weight:normal;">HR</div>
<div class="t" style="left:219px;top:404.00px;font-size:6.7px;color:#4d4d4d;font-weight:normal;">File Delete</div>
<div class="t" style="left:219px;top:413.00px;font-size:6.7px;color:#4d4d4d;font-weight:normal;">Count (Based</div>
<div class="t" style="left:219px;top:422.00px;font-size:6.7px;color:#4d4d4d;font-weight:normal;">on User)</div>
<div class="t" style="left:277.8px;top:404.00px;font-size:6.7px;color:#4d4d4d;font-weight:normal;">Threshold</div>
<div class="t" style="left:320.6px;top:404.00px;font-size:6.83px;color:#4d4d4d;font-weight:normal;">AD.demomwtsolutions.eu</div>
<div class="t" style="left:411px;top:404.00px;font-size:6.8px;color:#4d4d4d;font-weight:normal;">5</div>
<div class="t" style="left:435px;top:404.00px;font-size:6.8px;color:#4d4d4d;font-weight:normal;">4</div>
<div class="t" style="left:458.75px;top:404.00px;font-size:6.8px;color:#4d4d4d;font-weight:normal;">5</div>
<div class="t" style="left:482.8px;top:404.00px;font-size:6.8px;color:#4d4d4d;font-weight:normal;">5</div>
<div class="t" style="left:506px;top:404.00px;font-size:6.8px;color:#4d4d4d;font-weight:normal;">5</div>
<div class="t" style="left:530.6px;top:404.00px;font-size:6.8px;color:#4d4d4d;font-weight:normal;">5</div>
<div class="t" style="left:554.4px;top:404.00px;font-size:6.8px;color:#4d4d4d;font-weight:normal;">5</div>
<div class="t" style="left:578px;top:404.00px;font-size:6.8px;color:#4d4d4d;font-weight:normal;">5</div>
<div class="t" style="left:602px;top:404.00px;font-size:6.8px;color:#4d4d4d;font-weight:normal;">5</div>
<div class="t" style="left:625.6px;top:404.00px;font-size:6.8px;color:#4d4d4d;font-weight:normal;">6</div>
<div class="t" style="left:650px;top:404.00px;font-size:6.8px;color:#4d4d4d;font-weight:normal;">5</div>
<div class="t" style="left:674.4px;top:404.00px;font-size:6.8px;color:#4d4d4d;font-weight:normal;">5</div>
<div class="t" style="left:707px;top:404.00px;font-size:6.8px;color:#4d4d4d;font-weight:normal;">5</div>
<div class="t" style="left:730.7px;top:404.00px;font-size:6.8px;color:#4d4d4d;font-weight:normal;">5</div>
<div class="t" style="left:753.8px;top:404.00px;font-size:6.8px;color:#4d4d4d;font-weight:normal;">5</div>
<div class="t" style="left:777.5px;top:404.00px;font-size:6.8px;color:#4d4d4d;font-weight:normal;">5</div>
<div class="t" style="left:801.3px;top:404.00px;font-size:6.8px;color:#4d4d4d;font-weight:normal;">5</div>
<div class="t" style="left:825px;top:404.00px;font-size:6.8px;color:#4d4d4d;font-weight:normal;">5</div>
<div class="t" style="left:848px;top:404.00px;font-size:6.8px;color:#4d4d4d;font-weight:normal;">5</div>
<div class="t" style="left:871.8px;top:404.00px;font-size:6.8px;color:#4d4d4d;font-weight:normal;">5</div>
<div class="t" style="left:895.3px;top:404.00px;font-size:6.8px;color:#4d4d4d;font-weight:normal;">5</div>
<div class="t" style="left:919px;top:404.00px;font-size:6.8px;color:#4d4d4d;font-weight:normal;">5</div>
<div class="t" style="left:942.7px;top:404.00px;font-size:6.8px;color:#4d4d4d;font-weight:normal;">5</div>
<div class="t" style="left:966.8px;top:404.00px;font-size:6.8px;color:#4d4d4d;font-weight:normal;">5</div>
<div class="t" style="left:159.7px;top:444.30px;font-size:6.85px;color:#4d4d4d;font-weight:normal;">Anna Nowak</div>
<div class="t" style="left:159.7px;top:453.30px;font-size:6.85px;color:#4d4d4d;font-weight:normal;">HR</div>
<div class="t" style="left:219px;top:444.30px;font-size:6.7px;color:#4d4d4d;font-weight:normal;">File</div>
<div class="t" style="left:219px;top:453.30px;font-size:6.7px;color:#4d4d4d;font-weight:normal;">Modification</div>
<div class="t" style="left:219px;top:462.30px;font-size:6.7px;color:#4d4d4d;font-weight:normal;">Count (Based</div>
<div class="t" style="left:219px;top:471.30px;font-size:6.7px;color:#4d4d4d;font-weight:normal;">on User)</div>
<div class="t" style="left:277.8px;top:444.30px;font-size:6.7px;color:#4d4d4d;font-weight:normal;">Mean</div>
<div class="t" style="left:320.6px;top:444.30px;font-size:6.83px;color:#4d4d4d;font-weight:normal;">AD.demomwtsolutions.eu</div>
<div class="t" style="left:411px;top:444.30px;font-size:6.8px;color:#4d4d4d;font-weight:normal;">4</div>
<div class="t" style="left:435px;top:444.30px;font-size:6.8px;color:#4d4d4d;font-weight:normal;">4</div>
<div class="t" style="left:458.75px;top:444.30px;font-size:6.8px;color:#4d4d4d;font-weight:normal;">4</div>
<div class="t" style="left:482.8px;top:444.30px;font-size:6.8px;color:#4d4d4d;font-weight:normal;">4</div>
<div class="t" style="left:506px;top:444.30px;font-size:6.8px;color:#4d4d4d;font-weight:normal;">4</div>
<div class="t" style="left:530.6px;top:444.30px;font-size:6.8px;color:#4d4d4d;font-weight:normal;">4</div>
<div class="t" style="left:554.4px;top:444.30px;font-size:6.8px;color:#4d4d4d;font-weight:normal;">4</div>
<div class="t" style="left:578px;top:444.30px;font-size:6.8px;color:#4d4d4d;font-weight:normal;">4</div>
<div class="t" style="left:602px;top:444.30px;font-size:6.8px;color:#4d4d4d;font-weight:normal;">4</div>
<div class="t" style="left:625.6px;top:444.30px;font-size:6.8px;color:#4d4d4d;font-weight:normal;">4</div>
<div class="t" style="left:650px;top:444.30px;font-size:6.8px;color:#4d4d4d;font-weight:normal;">4</div>
<div class="t" style="left:674.4px;top:444.30px;font-size:6.8px;color:#4d4d4d;font-weight:normal;">4</div>
<div class="t" style="left:707px;top:444.30px;font-size:6.8px;color:#4d4d4d;font-weight:normal;">4</div>
<div class="t" style="left:730.7px;top:444.30px;font-size:6.8px;color:#4d4d4d;font-weight:normal;">4</div>
<div class="t" style="left:753.8px;top:444.30px;font-size:6.8px;color:#4d4d4d;font-weight:normal;">4</div>
<div class="t" style="left:777.5px;top:444.30px;font-size:6.8px;color:#4d4d4d;font-weight:normal;">4</div>
<div class="t" style="left:801.3px;top:444.30px;font-size:6.8px;color:#4d4d4d;font-weight:normal;">4</div>
<div class="t" style="left:825px;top:444.30px;font-size:6.8px;color:#4d4d4d;font-weight:normal;">4</div>
<div class="t" style="left:848px;top:444.30px;font-size:6.8px;color:#4d4d4d;font-weight:normal;">4</div>
<div class="t" style="left:871.8px;top:444.30px;font-size:6.8px;color:#4d4d4d;font-weight:normal;">4</div>
<div class="t" style="left:895.3px;top:444.30px;font-size:6.8px;color:#4d4d4d;font-weight:normal;">4</div>
<div class="t" style="left:919px;top:444.30px;font-size:6.8px;color:#4d4d4d;font-weight:normal;">4</div>
<div class="t" style="left:942.7px;top:444.30px;font-size:6.8px;color:#4d4d4d;font-weight:normal;">4</div>
<div class="t" style="left:966.8px;top:444.30px;font-size:6.8px;color:#4d4d4d;font-weight:normal;">4</div>
<div class="t" style="left:159.7px;top:493.70px;font-size:6.85px;color:#4d4d4d;font-weight:normal;">Anna Nowak</div>
<div class="t" style="left:159.7px;top:502.70px;font-size:6.85px;color:#4d4d4d;font-weight:normal;">HR</div>
<div class="t" style="left:219px;top:493.70px;font-size:6.7px;color:#4d4d4d;font-weight:normal;">File Delete</div>
<div class="t" style="left:219px;top:502.70px;font-size:6.7px;color:#4d4d4d;font-weight:normal;">Count (Based</div>
<div class="t" style="left:219px;top:511.70px;font-size:6.7px;color:#4d4d4d;font-weight:normal;">on User)</div>
<div class="t" style="left:277.8px;top:493.70px;font-size:6.7px;color:#4d4d4d;font-weight:normal;">Mean</div>
<div class="t" style="left:320.6px;top:493.70px;font-size:6.83px;color:#4d4d4d;font-weight:normal;">AD.demomwtsolutions.eu</div>
<div class="t" style="left:411px;top:493.70px;font-size:6.8px;color:#4d4d4d;font-weight:normal;">4</div>
<div class="t" style="left:435px;top:493.70px;font-size:6.8px;color:#4d4d4d;font-weight:normal;">4</div>
<div class="t" style="left:458.75px;top:493.70px;font-size:6.8px;color:#4d4d4d;font-weight:normal;">4</div>
<div class="t" style="left:482.8px;top:493.70px;font-size:6.8px;color:#4d4d4d;font-weight:normal;">4</div>
<div class="t" style="left:506px;top:493.70px;font-size:6.8px;color:#4d4d4d;font-weight:normal;">4</div>
<div class="t" style="left:530.6px;top:493.70px;font-size:6.8px;color:#4d4d4d;font-weight:normal;">4</div>
<div class="t" style="left:554.4px;top:493.70px;font-size:6.8px;color:#4d4d4d;font-weight:normal;">4</div>
<div class="t" style="left:578px;top:493.70px;font-size:6.8px;color:#4d4d4d;font-weight:normal;">4</div>
<div class="t" style="left:602px;top:493.70px;font-size:6.8px;color:#4d4d4d;font-weight:normal;">4</div>
<div class="t" style="left:625.6px;top:493.70px;font-size:6.8px;color:#4d4d4d;font-weight:normal;">4</div>
<div class="t" style="left:650px;top:493.70px;font-size:6.8px;color:#4d4d4d;font-weight:normal;">4</div>
<div class="t" style="left:674.4px;top:493.70px;font-size:6.8px;color:#4d4d4d;font-weight:normal;">4</div>
<div class="t" style="left:707px;top:493.70px;font-size:6.8px;color:#4d4d4d;font-weight:normal;">4</div>
<div class="t" style="left:730.7px;top:493.70px;font-size:6.8px;color:#4d4d4d;font-weight:normal;">4</div>
<div class="t" style="left:753.8px;top:493.70px;font-size:6.8px;color:#4d4d4d;font-weight:normal;">4</div>
<div class="t" style="left:777.5px;top:493.70px;font-size:6.8px;color:#4d4d4d;font-weight:normal;">4</div>
<div class="t" style="left:801.3px;top:493.70px;font-size:6.8px;color:#4d4d4d;font-weight:normal;">4</div>
<div class="t" style="left:825px;top:493.70px;font-size:6.8px;color:#4d4d4d;font-weight:normal;">4</div>
<div class="t" style="left:848px;top:493.70px;font-size:6.8px;color:#4d4d4d;font-weight:normal;">4</div>
<div class="t" style="left:871.8px;top:493.70px;font-size:6.8px;color:#4d4d4d;font-weight:normal;">4</div>
<div class="t" style="left:895.3px;top:493.70px;font-size:6.8px;color:#4d4d4d;font-weight:normal;">4</div>
<div class="t" style="left:919px;top:493.70px;font-size:6.8px;color:#4d4d4d;font-weight:normal;">4</div>
<div class="t" style="left:942.7px;top:493.70px;font-size:6.8px;color:#4d4d4d;font-weight:normal;">4</div>
<div class="t" style="left:966.8px;top:493.70px;font-size:6.8px;color:#4d4d4d;font-weight:normal;">4</div>
<svg class="b" style="left:995px;top:500.5px" width="14" height="14" viewBox="0 0 14 14"><circle cx="6.5" cy="6.7" r="6.2" fill="#34414a"/><circle cx="6.5" cy="5.2" r="1.9" fill="#a9dbe8"/><path d="M3.2 10.2 Q3.5 7.4 6.5 7.4 Q9.5 7.4 9.8 10.2Z" fill="#d8c470"/><circle cx="11.3" cy="1.8" r="1.7" fill="#e0574a"/></svg>
</body></html>
